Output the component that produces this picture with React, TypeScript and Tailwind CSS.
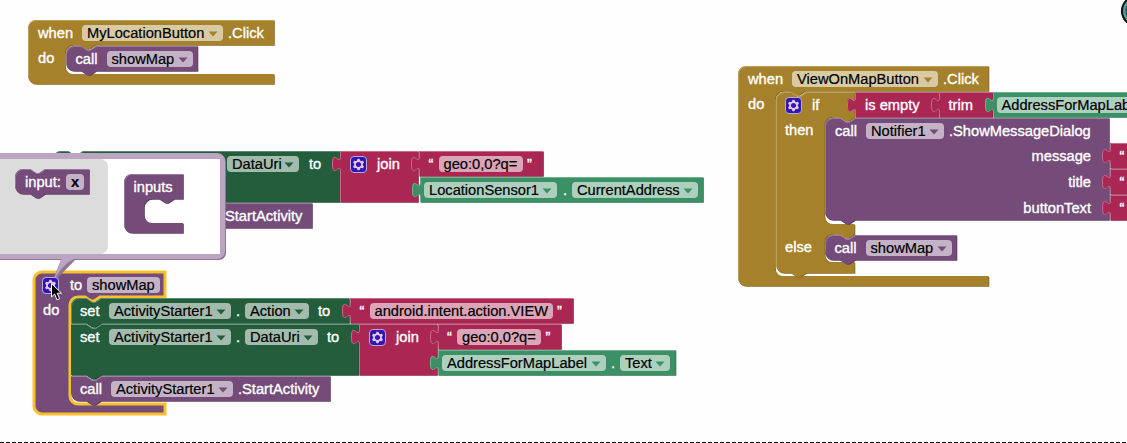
import type { ReactNode } from "react";

const NOTCH = "l6,4 3,0 6,-4";
const NUB = "l-6,4 -3,0 -6,-4";
const TAB = "c0,-10 -8,8 -8,-7.5 s8,2.5 8,-7.5";

type Kind = "gold" | "purple" | "forest" | "red" | "green";

const COLORS: Record<Kind, { fill: string; dark: string; light: string }> = {
  gold: { fill: "#a5812b", dark: "#846722", light: "#c5ab70" },
  purple: { fill: "#744b79", dark: "#5d3c61", light: "#a587a9" },
  forest: { fill: "#235d3b", dark: "#1c4a2f", light: "#6d9a80" },
  red: { fill: "#aa2753", dark: "#881f42", light: "#d0829b" },
  green: { fill: "#3c9065", dark: "#307351", light: "#82bc9e" },
};

/** Command block outline with a notch above and a nub below. */
function stack(w: number, h: number, roundTop = true, roundBottom = true) {
  return (
    (roundTop ? "M0,8 a8,8 0 0 1 8,-8" : "M0,0") +
    ` H15 ${NOTCH} H${w} V${h} H30 ${NUB} ` +
    (roundBottom ? `H8 a8,8 0 0 1 -8,-8 z` : "H0 z")
  );
}

/** Value block outline with a puzzle tab on its left side. */
function value(w: number, h: number) {
  return `M0,0 H${w} V${h} H0 V20 ${TAB} z`;
}

/** C shaped outline that wraps a single statement input. */
function wrap(w: number, x: number, bottom: number, h: number) {
  return `M0,8 a8,8 0 0 1 8,-8 H${w} V25 H${x + 30} ${NUB} h-7 a8,8 0 0 0 -8,8 V${bottom - 8} a8,8 0 0 0 8,8 H${w} V${h} H8 a8,8 0 0 1 -8,-8 z`;
}

const IF_ELSE = `M0,8 a8,8 0 0 1 8,-8 H15 ${NOTCH} H78.5 V25 ${NUB} h-7 a8,8 0 0 0 -8,8 V124 a8,8 0 0 0 8,8 H78.5 V142 ${NUB} h-7 a8,8 0 0 0 -8,8 V162 a8,8 0 0 0 8,8 H78.5 V181 H30 ${NUB} H8 a8,8 0 0 1 -8,-8 z`;

function Block({ at, kind, d, edge, selected, children }: {
  at: string; kind: Kind; d: string; edge?: string; selected?: boolean; children?: ReactNode;
}) {
  const c = COLORS[kind];
  return (
    <div className={`absolute ${at}`} style={{ color: c.fill }}>
      <svg className="absolute left-0 top-0 overflow-visible" width="1" height="1">
        {!selected && <path d={d} fill={c.dark} transform="translate(0.8,0.8)" />}
        <path d={d} fill={c.fill} />
        {edge && <path d={edge} fill="none" stroke={c.light} strokeWidth="1" strokeOpacity="0.75" transform="translate(0.5,0.5)" />}
        {selected && <path d={d} fill="none" stroke="#f8c12c" strokeWidth="3" />}
      </svg>
      <div className="relative flex flex-col">{children}</div>
    </div>
  );
}

function Row({ className = "pl-[10px]", children }: { className?: string; children?: ReactNode }) {
  return <div className={`flex h-[26px] items-center ${className}`}>{children}</div>;
}

function Label({ w = "", children }: { w?: string; children: ReactNode }) {
  return <span className={`shrink-0 text-white [-webkit-text-stroke:0.35px_white] ${w}`}>{children}</span>;
}

function Field({ w, arrow = true, children }: { w: string; arrow?: boolean; children: ReactNode }) {
  return (
    <span className={`flex h-[16.5px] shrink-0 items-center justify-between rounded-[4px] bg-white/58 pl-[5px] pr-[5px] ${w}`}>
      <span className="text-black [-webkit-text-stroke:0.2px_black]">{children}</span>
      {arrow && (
        <svg width="10" height="6" viewBox="0 0 10 6" className="mt-px shrink-0">
          <path d="M0.5,0.5 H9.5 L5,5.5 z" fill="currentColor" />
        </svg>
      )}
    </span>
  );
}

const GEAR_TEETH = [0, 60, 120, 180, 240, 300];

function Gear() {
  return (
    <svg width="17" height="17" viewBox="0 0 17 17" className="shrink-0">
      <rect x="0.5" y="0.5" width="16" height="16" rx="3.5" fill="#3015b4" stroke="#b8a9dc" />
      <g transform="translate(8.5,8.5)" fill="#e2c9df">
        {GEAR_TEETH.map((a) => (
          <path key={a} d="M-2,-3.2 L-0.9,-5.7 H0.9 L2,-3.2 z" transform={`rotate(${a})`} />
        ))}
        <circle r="3.3" fill="#3015b4" stroke="#e2c9df" strokeWidth="1.4" />
      </g>
    </svg>
  );
}

const valueEdge = (w: number, h: number) => `M0,${h} V20 ${TAB} V0 H${w}`;
const topEdge = (w: number) => `M0,0 H15 ${NOTCH} H${w}`;
const roundEdge = (w: number, h: number) => `M0,${h - 8} V8 a8,8 0 0 1 8,-8 H15 ${NOTCH} H${w}`;
const hatEdge = (w: number, h: number) => `M0,${h - 8} V8 a8,8 0 0 1 8,-8 H${w}`;

function Text({ at, w, field, total }: { at: string; w: string; field: string; total: number }) {
  return (
    <Block at={at} kind="red" d={value(total, 25)} edge={valueEdge(total, 25)}>
      <Row className="pl-[9.5px]">
        <Label w="w-[10px]">“</Label>
        <Field w={w} arrow={false}>{field}</Field>
        <Label w="ml-[4.5px]">”</Label>
      </Row>
    </Block>
  );
}

function Join({ at }: { at: string }) {
  return (
    <Block at={at} kind="red" d={value(78, 51)} edge={valueEdge(78, 51)}>
      <Row className="pl-[9.5px]">
        <Gear />
        <Label w="ml-[10.5px]">join</Label>
      </Row>
    </Block>
  );
}

function ShowMapCall({ at }: { at: string }) {
  return (
    <Block at={at} kind="purple" d={stack(131.5, 25)} edge={roundEdge(131.5, 25)}>
      <Row className="pl-[9.5px]">
        <Label w="w-[31px]">call</Label>
        <Field w="w-[86.5px]">showMap</Field>
      </Row>
    </Block>
  );
}

function Mutator() {
  return (
    <div className="absolute left-0 top-[153px] h-[132px] w-[227px]">
      <svg className="absolute left-0 top-0 overflow-visible" width="227" height="132">
        <path d="M-5,1 H218 a8,8 0 0 1 8,8 V100 a7,7 0 0 1 -7,7 H75 L51,132 L61,107 H-5 z" fill="#8f7696" />
        <path d="M-5,0 H217 a8,8 0 0 1 8,8 V98 a8,8 0 0 1 -8,8 H74 Q62,111 51,132 Q60,112 61,106 H-5 z" fill="#bba5c1" />
      </svg>
      <div className="relative mt-[6px] flex h-[95px] w-[220px] bg-white">
        <div className="h-full w-[108px] rounded-r-[8px] bg-[#dcdcdc]" />
      </div>
      <Block at="left-[15px] top-[16px]" kind="purple" d={stack(74, 25)} edge={roundEdge(74, 25)}>
        <Row>
          <Label w="w-[41px]">input:</Label>
          <Field w="w-[18px]" arrow={false}><b>x</b></Field>
        </Row>
      </Block>
      <Block at="left-[124px] top-[21px]" kind="purple" d={wrap(59, 20, 49, 59)} edge={hatEdge(59, 59)}>
        <Row className="pl-[9.5px]"><Label>inputs</Label></Row>
      </Block>
    </div>
  );
}

export default function App() {
  return (
    <main className="relative h-[443px] w-[1127px] overflow-hidden whitespace-nowrap bg-[#fefefe] font-['Liberation_Sans',Arial,sans-serif] text-[14.67px] leading-[16px]">
      <Block at="left-[28px] top-[20px]" kind="gold" d={wrap(246, 37, 54, 64)} edge={hatEdge(246, 64)}>
        <Row>
          <Label w="w-[44px]">when</Label>
          <Field w="w-[141px]">MyLocationButton</Field>
          <Label w="ml-[5px]">.Click</Label>
        </Row>
        <Row className="pb-[2px] pl-[10px]"><Label>do</Label></Row>
      </Block>
      <ShowMapCall at="left-[66px] top-[46px]" />

      <Block at="left-[53px] top-[203px]" kind="purple" d={stack(259, 25)} edge={topEdge(259)} />
      <Block at="left-[53px] top-[151px]" kind="forest" d={stack(287, 51, true, false)} edge={roundEdge(287, 51)}>
        <Row className="pl-[174px]">
          <Field w="w-[72px]">DataUri</Field>
          <Label w="ml-[10px]">to</Label>
        </Row>
      </Block>
      <Join at="left-[340px] top-[151px]" />
      <Text at="left-[419px] top-[151px]" total={124} w="w-[84px]" field="geo:0,0?q=" />
      <Block at="left-[420px] top-[177px]" kind="green" d={value(283, 25)} edge={valueEdge(283, 25)}>
        <Row className="pl-[4px]">
          <Field w="w-[133px]">LocationSensor1</Field>
          <Label w="ml-[6px] w-[9px]">.</Label>
          <Field w="w-[126px]">CurrentAddress</Field>
        </Row>
      </Block>

      <Block at="left-[34px] top-[272px]" kind="purple" selected d={wrap(131, 36, 132, 142)}>
        <Row className="pl-[8px]">
          <Gear />
          <Label w="ml-[11px] w-[17px]">to</Label>
          <Field w="w-[73px]" arrow={false}>showMap</Field>
        </Row>
        <Row className="pb-[2px] pl-[9px]"><Label>do</Label></Row>
      </Block>

      <Block at="left-[71px] top-[376px]" kind="purple" d={stack(259, 25, false)} edge={topEdge(259)}>
        <Row className="pl-[9px]">
          <Label w="w-[31px]">call</Label>
          <Field w="w-[122px]">ActivityStarter1</Field>
          <Label w="ml-[5px]">.StartActivity</Label>
        </Row>
      </Block>
      <Block at="left-[71px] top-[324px]" kind="forest" d={stack(287.5, 51, false, false)} edge={topEdge(287)}>
        <Row className="pl-[9px]">
          <Label w="w-[29px]">set</Label>
          <Field w="w-[122px]">ActivityStarter1</Field>
          <Label w="ml-[5px] w-[9px]">.</Label>
          <Field w="w-[73px]">DataUri</Field>
          <Label w="ml-[9px]">to</Label>
        </Row>
      </Block>
      <Block at="left-[71px] top-[298px]" kind="forest" d={stack(278, 25, true, false)} edge={roundEdge(278, 34)}>
        <Row className="pl-[9px]">
          <Label w="w-[29px]">set</Label>
          <Field w="w-[122px]">ActivityStarter1</Field>
          <Label w="ml-[5px] w-[9px]">.</Label>
          <Field w="w-[64px]">Action</Field>
          <Label w="ml-[9px]">to</Label>
        </Row>
      </Block>
      <svg className="absolute left-[71px] top-[324px] overflow-visible" width="1" height="1">
        <path d={topEdge(278)} fill="none" stroke="#6d9a80" strokeOpacity="0.75" transform="translate(0.5,0.5)" />
        <path d={topEdge(259)} fill="none" stroke="#a587a9" strokeOpacity="0.75" transform="translate(0.5,52.5)" />
      </svg>
      <Text at="left-[350px] top-[298px]" total={223} w="w-[183px]" field="android.intent.action.VIEW" />
      <Join at="left-[359px] top-[324px]" />
      <Text at="left-[437.5px] top-[324px]" total={123} w="w-[84px]" field="geo:0,0?q=" />
      <Block at="left-[438px] top-[350px]" kind="green" d={value(237.5, 25)} edge={valueEdge(237.5, 25)}>
        <Row className="pl-[4px]">
          <Field w="w-[164px]">AddressForMapLabel</Field>
          <Label w="ml-[5px] w-[9px]">.</Label>
          <Field w="w-[50px]">Text</Field>
        </Row>
      </Block>

      <Block at="left-[738px] top-[66px]" kind="gold" d={wrap(250.5, 37, 210, 220)} edge={hatEdge(250.5, 220)}>
        <Row>
          <Label w="w-[44px]">when</Label>
          <Field w="w-[146px]">ViewOnMapButton</Field>
          <Label w="ml-[5px]">.Click</Label>
        </Row>
        <Row className="pb-[2px] pl-[10px]"><Label>do</Label></Row>
      </Block>
      <Block at="left-[776px] top-[92px]" kind="gold" d={IF_ELSE} edge={roundEdge(78.5, 181)}>
        <Row className="pl-[9px]">
          <Gear />
          <Label w="ml-[10px]">if</Label>
        </Row>
        <Row className="pb-[2px] pl-[9px]"><Label>then</Label></Row>
        <Row className="mt-[90px] pl-[9px]"><Label>else</Label></Row>
      </Block>
      <Block at="left-[855px] top-[92px]" kind="red" d={value(84, 25)} edge={valueEdge(84, 25)}>
        <Row><Label>is empty</Label></Row>
      </Block>
      <Block at="left-[938.5px] top-[92px]" kind="red" d={value(53.5, 25)} edge={valueEdge(53.5, 25)}>
        <Row><Label>trim</Label></Row>
      </Block>
      <Block at="left-[992.5px] top-[92px]" kind="green" d={value(238, 25)} edge={valueEdge(238, 25)}>
        <Row className="pl-[4px]"><Field w="w-[164px]">AddressForMapLabel</Field></Row>
      </Block>
      <Block at="left-[825px] top-[118px]" kind="purple" d={stack(284, 102)} edge={roundEdge(284, 102)}>
        <Row>
          <Label w="w-[31px]">call</Label>
          <Field w="w-[78px]">Notifier1</Field>
          <Label w="ml-[5px]">.ShowMessageDialog</Label>
        </Row>
        <div className="flex w-[266px] flex-col items-end">
          <Row className="pb-[2px]"><Label>message</Label></Row>
          <Row className="pb-[2px]"><Label>title</Label></Row>
          <Row className="pb-[2px]"><Label>buttonText</Label></Row>
        </div>
      </Block>
      <Text at="left-[1110px] top-[143px]" total={60} w="w-[30px]" field="" />
      <Text at="left-[1110px] top-[169px]" total={60} w="w-[30px]" field="" />
      <Text at="left-[1110px] top-[195px]" total={60} w="w-[30px]" field="" />
      <ShowMapCall at="left-[825px] top-[235px]" />

      <Mutator />
      <div className="absolute left-[225px] top-[208px]"><Label>StartActivity</Label></div>
      <div className="absolute left-[42px] top-[277px]"><Gear /></div>
      <svg className="absolute left-[50px] top-[282px]" width="14" height="20" viewBox="0 0 14 20">
        <path d="M1.5,1.5 V15 L4.6,12 L7,17.8 L9.6,16.7 L7.2,11.2 H11.5 z" fill="#000" stroke="#fff" />
      </svg>

      <svg className="absolute right-0 top-0" width="8" height="26" viewBox="0 0 8 26">
        <circle cx="17.5" cy="11" r="14.5" fill="#2b4f7c" stroke="#171717" strokeWidth="2.2" />
        <circle cx="17.5" cy="11" r="12.3" fill="none" stroke="#4fa687" strokeWidth="2.2" />
      </svg>
      <div className="absolute bottom-0 left-0 h-px w-full bg-[repeating-linear-gradient(90deg,#111_0_4px,#fefefe_4px_6px)]" />
    </main>
  );
}
